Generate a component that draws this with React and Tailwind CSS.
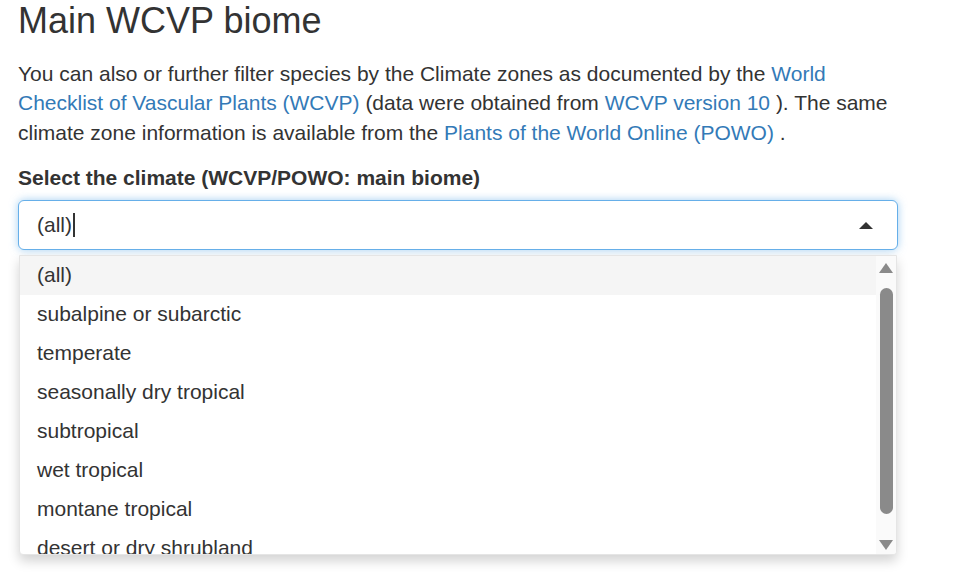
export default function App() {
  const options = [
    "(all)",
    "subalpine or subarctic",
    "temperate",
    "seasonally dry tropical",
    "subtropical",
    "wet tropical",
    "montane tropical",
    "desert or dry shrubland",
  ];

  return (
    <div className="min-h-[574px] bg-white px-[18px] text-[#333] font-['Liberation_Sans',Arial,sans-serif]">
      <h2 className="pt-[1px] text-[36px] leading-[1.1]">Main WCVP biome</h2>
      <p className="mt-[18px] w-[880px] text-[21px] leading-[29.5px]">
        You can also or further filter species by the Climate zones as documented by the{" "}
        <a className="text-[#337ab7]">World Checklist of Vascular Plants (WCVP)</a> (data were obtained from{" "}
        <a className="text-[#337ab7]">WCVP version 10</a> ). The same climate zone information is available from the{" "}
        <a className="text-[#337ab7]">Plants of the World Online (POWO)</a> .
      </p>

      <label className="mt-[16px] block text-[21px] font-bold leading-[29px]">
        Select the climate (WCVP/POWO: main biome)
      </label>

      <div className="relative mt-[8px] w-[880px]">
        <div className="flex h-[50px] items-center rounded-[6px] border border-[#66afe9] bg-white pl-[18px] pr-[24px] text-[21px] shadow-[0_0_8px_rgba(102,175,233,0.6)]">
          <span>(all)</span>
          <span className="ml-[1px] inline-block h-[24px] w-[2px] bg-[#333]" />
          <span className="ml-auto h-0 w-0 border-x-[7px] border-b-[7px] border-x-transparent border-b-[#333]" />
        </div>

        <div className="absolute left-[1px] right-[1px] top-[55px] flex h-[300px] overflow-hidden rounded-b-[4px] border border-[#e5e5e5] bg-white shadow-[0_6px_12px_rgba(0,0,0,0.175)]">
          <ul className="flex-1 text-[21px]">
            {options.map((o, i) => (
              <li
                key={o}
                className={`h-[39px] pl-[17px] leading-[37px] ${i === 0 ? "bg-[#f5f5f5]" : ""}`}
              >
                {o}
              </li>
            ))}
          </ul>
          <div className="flex w-[20px] flex-col items-center bg-[#fafafa]">
            <span className="mt-[7px] h-0 w-0 border-x-[7px] border-b-[10px] border-x-transparent border-b-[#8a8a8a]" />
            <span className="mt-[15px] h-[226px] w-[13px] rounded-full bg-[#8a8a8a]" />
            <span className="mt-[26px] h-0 w-0 border-x-[7px] border-t-[10px] border-x-transparent border-t-[#8a8a8a]" />
          </div>
        </div>
      </div>
    </div>
  );
}
